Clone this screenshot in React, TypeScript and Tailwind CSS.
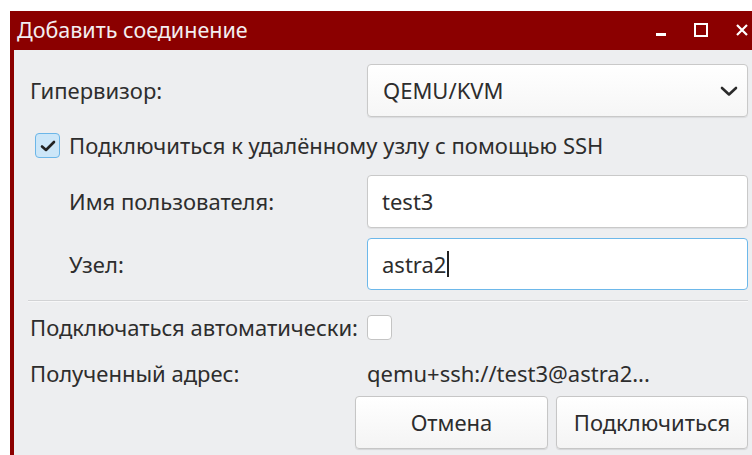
import React from "react";

const font = { fontFamily: '"Noto Sans", "Open Sans", sans-serif' };

function Chevron() {
  return (
    <svg width="18" height="12" viewBox="0 0 18 12" fill="none">
      <path d="M2 3 L9 9.5 L16 3" stroke="#2b2b2b" strokeWidth="2.6" strokeLinecap="round" strokeLinejoin="round" />
    </svg>
  );
}

function CheckMark() {
  return (
    <svg width="18" height="14" viewBox="0 0 18 14" fill="none">
      <path d="M3 7.5 L7 11 L15 3" stroke="#222" strokeWidth="2.6" strokeLinecap="round" strokeLinejoin="round" />
    </svg>
  );
}

export default function App() {
  return (
    <div className="w-[752px] h-[455px] overflow-hidden bg-white text-[#2d2d2d]" style={font}>
      <div className="ml-[10px] mt-[11px] w-[752px] h-[460px] bg-[#8b0000] flex flex-col">
        {/* title bar */}
        <div className="h-[39px] flex items-center pl-[7px] pr-[14px] shrink-0">
          <span className="text-[21.5px] text-[#f3eef0] leading-none -mt-[2px]">Добавить соединение</span>
          <div className="ml-auto flex items-center">
            <div className="w-[10px] h-[3px] bg-white mt-[7px]" />
            <div className="ml-[28px] w-[14px] h-[14px] border-2 border-white -mt-[2px]" />
            <svg className="ml-[28px] -mt-[2px]" width="12" height="12" viewBox="0 0 12 12">
              <path d="M1 1 L11 11 M11 1 L1 11" stroke="white" strokeWidth="2.2" />
            </svg>
          </div>
        </div>

        {/* dialog body */}
        <div className="ml-[4px] mr-[4px] flex-1 bg-[#edeef0] pl-[16px] pr-[10px] text-[22px]">
          {/* hypervisor */}
          <div className="mt-[14px] flex items-center h-[53px]">
            <span className="w-[337px]">Гипервизор:</span>
            <div className="flex-1 h-full flex items-center rounded-[4px] border border-[#c9c9c9] bg-gradient-to-b from-white to-[#f6f6f6] shadow-[0_1px_1px_rgba(0,0,0,0.08)] pl-[15px] pr-[9px]">
              <span>QEMU/KVM</span>
              <span className="ml-auto flex"><Chevron /></span>
            </div>
          </div>

          {/* ssh checkbox */}
          <div className="mt-[16px] h-[25px] flex items-center pl-[5px]">
            <div className="w-[25px] h-[25px] rounded-[4px] border-[1.5px] border-[#6cb6e8] bg-[#cce6f8] flex items-center justify-center">
              <CheckMark />
            </div>
            <span className="ml-[9px]">Подключиться к удалённому узлу с помощью SSH</span>
          </div>

          {/* user name */}
          <div className="mt-[17px] flex items-center h-[53px]">
            <span className="w-[337px] pl-[39px]">Имя пользователя:</span>
            <div className="flex-1 h-full flex items-center rounded-[4px] border border-[#c9c9c9] bg-white shadow-[0_1px_1px_rgba(0,0,0,0.06)] pl-[14px]">
              <span>test3</span>
            </div>
          </div>

          {/* host */}
          <div className="mt-[10px] flex items-center h-[52px]">
            <span className="w-[337px] pl-[39px]">Узел:</span>
            <div className="flex-1 h-full flex items-center rounded-[4px] border-[1.5px] border-[#6db8ea] bg-white pl-[14px]">
              <span>astra2</span>
              <span className="w-[1.5px] h-[26px] bg-[#222] ml-[1px]" />
            </div>
          </div>

          <div className="mt-[10px] ml-[-2px] h-[2px] bg-[#d2d3d5] border-b border-[#f7f7f8]" />

          {/* auto connect */}
          <div className="mt-[12px] flex items-center h-[26px]">
            <span className="w-[337px]">Подключаться автоматически:</span>
            <div className="w-[25px] h-[25px] rounded-[4px] border-[1.5px] border-[#c4c4c4] bg-white" />
          </div>

          {/* resulting uri */}
          <div className="mt-[20px] flex items-center h-[26px]">
            <span className="w-[337px]">Полученный адрес:</span>
            <span>qemu+ssh://test3@astra2...</span>
          </div>

          {/* buttons */}
          <div className="mt-[10px] flex justify-end gap-[8px]">
            <button className="w-[193px] h-[53px] rounded-[4px] border border-[#c6c6c6] bg-gradient-to-b from-white to-[#f4f4f4] shadow-[0_1px_1px_rgba(0,0,0,0.1)] text-[22px] text-[#2d2d2d]">
              Отмена
            </button>
            <button className="w-[192px] h-[53px] rounded-[4px] border border-[#c6c6c6] bg-gradient-to-b from-white to-[#f4f4f4] shadow-[0_1px_1px_rgba(0,0,0,0.1)] text-[22px] text-[#2d2d2d]">
              Подключиться
            </button>
          </div>
        </div>
      </div>
    </div>
  );
}
